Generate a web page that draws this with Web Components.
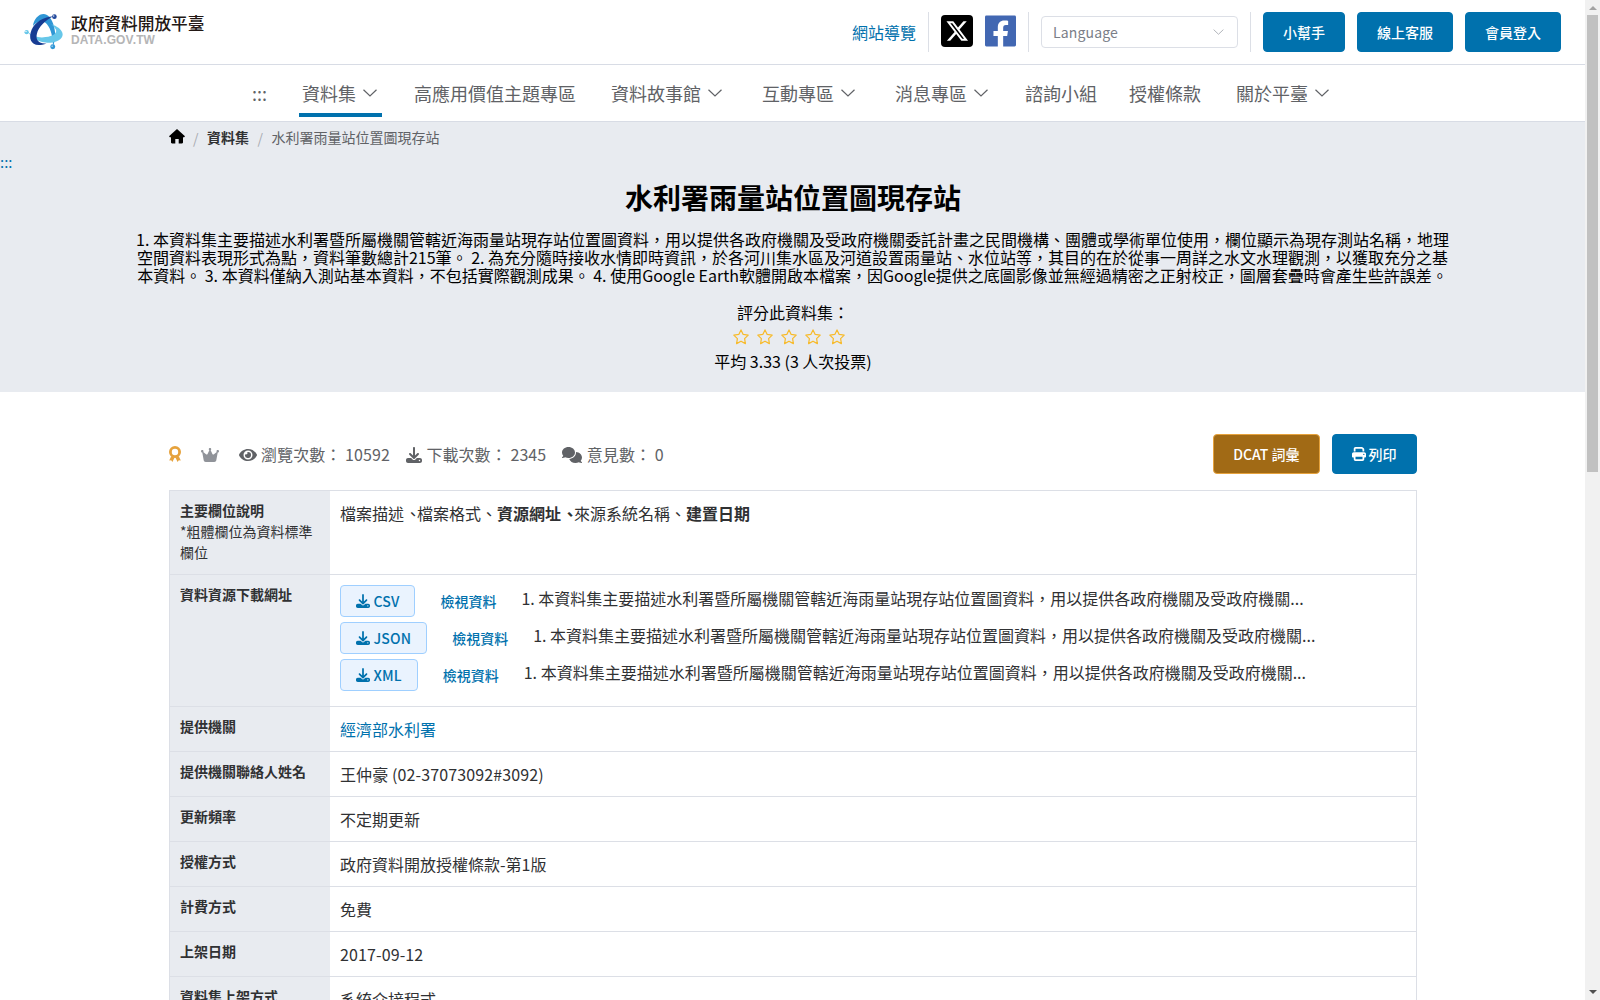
<!DOCTYPE html>
<html lang="zh-Hant-TW">
<head>
<meta charset="utf-8">
<title>水利署雨量站位置圖現存站 | 政府資料開放平臺</title>
<style>
  html, body {
    margin: 0;
    height: 100%;
    overflow: hidden;
  }
  body {
    --primary: #0071ad;
    --line: #dcdfe6;
    --panel: #e8ebf0;
    display: flex;
    background: #fff;
    color: #303133;
    font-family: "Noto Sans CJK TC", sans-serif;
    font-size: 16px;
    line-height: 24px;
  }
  main {
    flex: 1;
    min-width: 0;
    height: 1000px;
    overflow: hidden;
  }
  b {
    font-weight: 700;
  }
  .num {
    letter-spacing: 0.12px;
  }
</style>
</head>
<body>
<main>
  <site-header></site-header>
  <site-nav>
    <nav-item>:::</nav-item>
    <nav-item menu active>資料集</nav-item>
    <nav-item>高應用價值主題專區</nav-item>
    <nav-item menu>資料故事館</nav-item>
    <nav-item menu>互動專區</nav-item>
    <nav-item menu>消息專區</nav-item>
    <nav-item>諮詢小組</nav-item>
    <nav-item>授權條款</nav-item>
    <nav-item menu>關於平臺</nav-item>
  </site-nav>
  <dataset-hero>
    <span slot="title">水利署雨量站位置圖現存站</span>
    <span slot="description">1. 本資料集主要描述水利署暨所屬機關管轄近海雨量站現存站位置圖資料，用以提供各政府機關及受政府機關委託計畫之民間機構、團體或學術單位使用，欄位顯示為現存測站名稱，地理空間資料表現形式為點，資料筆數總計215筆。 2. 為充分隨時接收水情即時資訊，於各河川集水區及河道設置雨量站、水位站等，其目的在於從事一周詳之水文水理觀測，以獲取充分之基本資料。 3. 本資料僅納入測站基本資料，不包括實際觀測成果。 4. 使用Google Earth軟體開啟本檔案，因Google提供之底圖影像並無經過精密之正射校正，圖層套疊時會產生些許誤差。</span>
    <span slot="average">平均 3.33 (3 人次投票)</span>
  </dataset-hero>
  <dataset-stats></dataset-stats>
  <info-table>
    <info-row label="主要欄位說明" note="*粗體欄位為資料標準欄位"><field-list></field-list></info-row>
    <info-row label="資料資源下載網址">
      <resource-item type="CSV"></resource-item>
      <resource-item type="JSON"></resource-item>
      <resource-item type="XML"></resource-item>
    </info-row>
    <info-row label="提供機關"><span style="color: var(--primary)">經濟部水利署</span></info-row>
    <info-row label="提供機關聯絡人姓名"><span class="num">王仲豪 (02-37073092#3092)</span></info-row>
    <info-row label="更新頻率">不定期更新</info-row>
    <info-row label="授權方式">政府資料開放授權條款-第1版</info-row>
    <info-row label="計費方式">免費</info-row>
    <info-row label="上架日期"><span class="num">2017-09-12</span></info-row>
    <info-row label="資料集上架方式">系統介接程式</info-row>
  </info-table>
</main>
<page-scrollbar></page-scrollbar>

<script>
const ICONS = {
  home: ['0 0 16 15', '<path d="M8 0 16 7.2 14.9 8.6 14 7.9V13.2c0 .8-.4 1.2-1.2 1.2H9.7V10H6.3v4.4H3.2C2.4 14.4 2 14 2 13.2V7.9l-.9.7L0 7.2z"/>'],
  chevron: ['0 0 14 8', '<path d="M.5.8 7 7 13.5.8" fill="none" stroke="currentColor" stroke-width="1.2"/>'],
  x: ['0 0 32 32', '<rect width="32" height="32" rx="4" fill="#000"/><path transform="translate(4.2 4.1)" fill="#fff" d="M18.244 2.25h3.308l-7.227 8.26 8.502 11.24H16.17l-5.214-6.817L4.99 21.75H1.68l7.73-8.835L1.254 2.25H8.08l4.713 6.231zm-1.161 17.52h1.833L7.084 4.126H5.117z"/>'],
  facebook: ['0 32 448 448', '<path d="M428 32H20A20 20 0 0 0 0 52v408a20 20 0 0 0 20 20h165.25V327.69h-63V256h63v-54.64c0-62.15 37-96.48 93.67-96.48 27.14 0 55.52 4.84 55.52 4.84v61h-31.27c-30.81 0-40.42 19.12-40.42 38.73V256h68.78l-11 71.69h-57.78V480H428a20 20 0 0 0 20-20V52a20 20 0 0 0-20-20z"/>'],
  star: ['0 0 16 16', '<path d="M8 .9 10.200 5.400 15.200 6.100 11.600 9.600 12.400 14.600 8 12.200 3.600 14.600 4.400 9.600 .8 6.100 5.800 5.400z" fill="none" stroke="currentColor" stroke-width="1.200" stroke-linejoin="round"/>'],
  medal: ['0 0 12 16', '<path d="M2.200 10.200.2 14.400l2-.2 1.200 1.800 2.200-4.400zM9.800 10.200l2 4.200-2-.2-1.200 1.800-2.200-4.400z"/><circle cx="6" cy="6" r="4.600" fill="none" stroke="currentColor" stroke-width="2.800"/>'],
  crown: ['0 0 576 480', '<path d="M309 106c11.400-7 19-19.700 19-34c0-22.100-17.900-40-40-40s-40 17.900-40 40c0 14.400 7.600 27 19 34L209.700 220.600c-9.100 18.200-32.700 23.400-48.600 10.700L72 160c5-6.700 8-15 8-24c0-22.100-17.900-40-40-40S0 113.900 0 136s17.900 40 40 40c.2 0 .5 0 .7 0L86.400 427.400c5.500 30.400 32 52.600 63 52.600H426.600c30.900 0 57.400-22.100 63-52.600L535.300 176c.2 0 .5 0 .7 0c22.100 0 40-17.900 40-40s-17.900-40-40-40s-40 17.900-40 40c0 9 3 17.300 8 24l-89.100 71.300c-15.900 12.700-39.500 7.500-48.600-10.700L309 106z"/>'],
  eye: ['0 64 576 384', '<path d="M572.52 241.4C518.29 135.59 410.93 64 288 64S57.68 135.64 3.48 241.41a32.35 32.35 0 0 0 0 29.19C57.71 376.41 165.07 448 288 448s230.32-71.64 284.52-177.41a32.35 32.35 0 0 0 0-29.19zM288 400a144 144 0 1 1 144-144 143.93 143.93 0 0 1-144 144zm0-240a95.31 95.31 0 0 0-25.31 3.79 47.85 47.85 0 0 1-66.9 66.9A95.78 95.78 0 1 0 288 160z"/>'],
  download: ['0 0 512 512', '<path d="M288 32c0-17.7-14.3-32-32-32s-32 14.300-32 32V274.700l-73.400-73.400c-12.500-12.500-32.800-12.500-45.300 0s-12.500 32.800 0 45.300l128 128c12.500 12.500 32.800 12.500 45.300 0l128-128c12.500-12.500 12.500-32.800 0-45.300s-32.800-12.500-45.300 0L288 274.700V32zM64 352c-35.300 0-64 28.700-64 64v32c0 35.300 28.700 64 64 64H448c35.300 0 64-28.700 64-64V416c0-35.300-28.700-64-64-64H346.500l-45.300 45.300c-25 25-65.500 25-90.500 0L165.500 352H64zm368 56a24 24 0 1 1 0 48 24 24 0 1 1 0-48z"/>'],
  comments: ['0 0 640 512', '<path d="M208 352c114.900 0 208-78.800 208-176S322.900 0 208 0S0 78.800 0 176c0 38.600 14.700 74.300 39.600 103.400c-3.500 9.400-8.700 17.700-14.200 24.700c-4.800 6.200-9.700 11-13.300 14.300c-1.800 1.600-3.300 2.900-4.300 3.700c-.5 .4-.9 .7-1.100 .8l-.2 .2C1 327.200-1.400 334.400 .8 340.900S9.100 352 16 352c21.800 0 43.800-5.600 62.100-12.500c9.200-3.500 17.800-7.400 25.200-11.400C134.100 343.300 169.800 352 208 352zM448 176c0 112.300-99.100 196.900-216.500 207C255.800 457.400 336.400 512 432 512c38.200 0 73.900-8.700 104.700-23.900c7.500 4 16 7.900 25.200 11.400c18.300 6.900 40.300 12.500 62.100 12.500c6.900 0 13.100-4.500 15.200-11.100c2.100-6.600-.2-13.800-5.800-17.900l-.2-.2c-.2-.2-.6-.4-1.100-.8c-1-.8-2.500-2-4.300-3.700c-3.600-3.300-8.500-8.100-13.300-14.300c-5.500-7-10.700-15.400-14.200-24.700c24.900-29 39.600-64.700 39.600-103.400c0-92.800-84.900-168.900-192.600-175.500c.4 5.100 .6 10.300 .6 15.500z"/>'],
  print: ['0 0 512 512', '<path d="M128 0C92.700 0 64 28.700 64 64v96h64V64H354.700L384 93.300V160h64V93.300c0-17-6.700-33.300-18.700-45.300L400 18.700C388 6.700 371.700 0 354.700 0H128zM384 352v32 64H128V384 368 352H384zm64 32h32c17.700 0 32-14.300 32-32V256c0-35.300-28.700-64-64-64H64c-35.300 0-64 28.700-64 64v96c0 17.700 14.300 32 32 32H64v64c0 35.300 28.700 64 64 64H384c35.300 0 64-28.700 64-64V384zM432 248a24 24 0 1 1 0 48 24 24 0 1 1 0-48z"/>']
};

class SvgIcon extends HTMLElement {
  connectedCallback() {
    const [box, shape] = ICONS[this.getAttribute('name')];
    this.attachShadow({ mode: 'open' });
    this.shadowRoot.innerHTML = `
      <style>
        :host { display: block; flex: none; }
        svg { display: block; width: 100%; height: 100%; fill: currentColor; }
      </style>
      <svg viewBox="${box}">${shape}</svg>
    `;
  }
}
customElements.define('svg-icon', SvgIcon);

class SiteLogo extends HTMLElement {
  connectedCallback() {
    this.attachShadow({ mode: 'open' });
    this.shadowRoot.innerHTML = `
      <style>
        :host { display: flex; gap: 7px; margin-top: -2px; }
        svg { width: 40px; height: 37px; }
        .name {
          color: #231815;
          font-size: 16.7px;
          font-weight: 500;
          line-height: 20px;
        }
        .domain {
          color: #b5b5b6;
          font: bold 12px/12px "Liberation Sans", sans-serif;
          margin-top: 1px;
          letter-spacing: 0.15px;
        }
      </style>
      <svg viewBox="18 15 121 112">
        <path fill="#2f96d5" d="M45 54C49 29 68 13 86 20c14 6 24 30 26 54 1 15-1 27-6 42-1-26-5-52-19-68-12-13-28-10-42 6z"/>
        <path fill="#67c7e9" d="M29 72c15 14 34 19 54 16 24-3 37-13 31-24-3-5-8-11-14-15 17 5 34 16 35 30 1 16-23 27-47 26-25-1-46-13-59-33z"/>
        <path fill="#173c93" d="M107 25C78 27 51 42 41 66c-13 32 3 57 45 41-22 2-34-9-29-29 5-22 27-42 50-53z"/>
        <circle cx="110" cy="26" r="7" fill="#21489b"/>
        <circle cx="26" cy="73" r="6.500" fill="#67c7e9"/>
        <circle cx="105" cy="117" r="7.500" fill="#2f96d5"/>
        <circle cx="108" cy="24" r="2" fill="#fff"/>
        <circle cx="24" cy="71" r="2" fill="#fff"/>
        <circle cx="103" cy="115" r="2" fill="#fff"/>
      </svg>
      <div>
        <div class="name">政府資料開放平臺</div>
        <div class="domain">DATA.GOV.TW</div>
      </div>
    `;
  }
}
customElements.define('site-logo', SiteLogo);

class UiButton extends HTMLElement {
  connectedCallback() {
    this.attachShadow({ mode: 'open' });
    this.shadowRoot.innerHTML = `
      <style>
        :host {
          display: flex;
          align-items: center;
          gap: 3px;
          box-sizing: border-box;
          height: 40px;
          padding: 0 19px;
          border: 1px solid var(--primary);
          border-radius: 4px;
          background: var(--primary);
          color: #fff;
          font-size: 14px;
          font-weight: 500;
          line-height: 14px;
          white-space: nowrap;
        }
        :host([type="warning"]) { background: #a16a15; border-color: #e6a23c; }
        :host([type="plain"]) {
          gap: 3.5px;
          height: 32px;
          padding: 0 15px;
          background: #eaf3fe;
          border-color: #9fcfff;
          color: var(--primary);
          letter-spacing: 0.15px;
        }
      </style>
      <slot></slot>
    `;
  }
}
customElements.define('ui-button', UiButton);

class SiteHeader extends HTMLElement {
  connectedCallback() {
    this.attachShadow({ mode: 'open' });
    this.shadowRoot.innerHTML = `
      <style>
        :host {
          display: flex;
          align-items: center;
          gap: 12px;
          height: 64px;
          padding: 0 24px;
          border-bottom: 1px solid #d8dce5;
        }
        site-logo { margin-right: auto; }
        a { color: var(--primary); }
        i { width: 1px; height: 40px; background: var(--line); }
        .x { width: 32px; height: 32px; margin-top: -2px; }
        .fb { width: 31px; height: 32px; margin-top: -2px; color: #4267b2; }
        .select {
          display: flex;
          align-items: center;
          justify-content: space-between;
          box-sizing: border-box;
          width: 197px;
          height: 32px;
          padding: 0 13px 0 11px;
          border: 1px solid var(--line);
          border-radius: 4px;
          color: #7a7e87;
          font-size: 14px;
          letter-spacing: 0.15px;
        }
        .select svg-icon { width: 11px; height: 6px; color: #a8abb2; }
      </style>
      <site-logo></site-logo>
      <a>網站導覽</a>
      <i></i>
      <svg-icon class="x" name="x"></svg-icon>
      <svg-icon class="fb" name="facebook"></svg-icon>
      <i></i>
      <div class="select"><span>Language</span><svg-icon name="chevron"></svg-icon></div>
      <i></i>
      <ui-button>小幫手</ui-button>
      <ui-button>線上客服</ui-button>
      <ui-button>會員登入</ui-button>
    `;
  }
}
customElements.define('site-header', SiteHeader);

class SiteNav extends HTMLElement {
  connectedCallback() {
    this.attachShadow({ mode: 'open' });
    this.shadowRoot.innerHTML = `
      <style>
        :host {
          display: flex;
          justify-content: center;
          gap: 32px;
          height: 56px;
          padding-left: 1px;
          border-bottom: 1px solid #d8dce5;
        }
      </style>
      <slot></slot>
    `;
  }
}
customElements.define('site-nav', SiteNav);

class NavItem extends HTMLElement {
  connectedCallback() {
    this.attachShadow({ mode: 'open' });
    this.shadowRoot.innerHTML = `
      <style>
        :host {
          display: flex;
          align-items: center;
          box-sizing: border-box;
          height: 52px;
          padding-top: 7px;
          border-bottom: 4px solid transparent;
          color: #606266;
          font-size: 18px;
          white-space: nowrap;
        }
        :host([menu]) { padding-left: 3px; padding-right: 5px; }
        :host([active]) { border-color: var(--primary); }
        svg-icon { width: 14px; height: 8px; margin-left: 7px; }
      </style>
      <slot></slot>
      ${this.hasAttribute('menu') ? '<svg-icon name="chevron"></svg-icon>' : ''}
    `;
  }
}
customElements.define('nav-item', NavItem);

class DatasetHero extends HTMLElement {
  connectedCallback() {
    this.attachShadow({ mode: 'open' });
    this.shadowRoot.innerHTML = `
      <style>
        :host {
          display: block;
          height: 270px;
          background: var(--panel);
          color: #000;
          text-align: center;
        }
        nav {
          display: flex;
          align-items: center;
          width: 1248px;
          height: 29px;
          margin: 0 auto;
          font-size: 14px;
          line-height: 20px;
          color: #606266;
        }
        nav svg-icon { width: 16px; height: 15px; color: #000; }
        nav i { font-style: normal; color: #a8abb2; margin: 2px 8.500px 0; }
        nav b { color: #303133; }
        .anchor {
          text-align: left;
          color: var(--primary);
          height: 22px;
          font-size: 15px;
          line-height: 22px;
        }
        h1 {
          margin: 4px 0 13px 1px;
          font-size: 28px;
          font-weight: 700;
          line-height: 40px;
        }
        p { width: 1320px; margin: 0 auto 16px; line-height: 18px; }
        .label, .average { padding-left: 1px; }
        .rate { display: flex; justify-content: center; gap: 8px; padding: 5px 7px 4px 0; color: #f7ba2a; }
        .rate svg-icon { width: 16px; height: 16px; }
      </style>
      <nav>
        <svg-icon name="home"></svg-icon><i>/</i><b>資料集</b><i>/</i><span>水利署雨量站位置圖現存站</span>
      </nav>
      <div class="anchor">:::</div>
      <h1><slot name="title"></slot></h1>
      <p><slot name="description"></slot></p>
      <div class="label">評分此資料集：</div>
      <div class="rate">${'<svg-icon name="star"></svg-icon>'.repeat(5)}</div>
      <div class="average"><slot name="average"></slot></div>
    `;
  }
}
customElements.define('dataset-hero', DatasetHero);

class DatasetStats extends HTMLElement {
  connectedCallback() {
    this.attachShadow({ mode: 'open' });
    this.shadowRoot.innerHTML = `
      <style>
        :host {
          display: flex;
          align-items: center;
          width: 1248px;
          margin: 42px auto 16px;
          color: #606266;
        }
        span { margin: 0 16px 0 4.500px; white-space: pre; letter-spacing: 0.08px; }
        .medal { width: 12px; height: 16px; color: #e6a23c; margin-right: 20px; }
        .crown { width: 18px; height: 15px; color: #909399; margin-right: 20px; }
        .eye { width: 18px; height: 16px; margin-top: 1px; }
        .download { width: 16px; height: 16px; margin-top: 1px; }
        .comments { width: 20px; height: 16px; margin-top: 1px; }
        ui-button + ui-button { margin-left: 12px; }
        ui-button svg-icon { width: 14px; height: 14px; }
        ui-button:first-of-type { margin-left: auto; }
      </style>
      <svg-icon class="medal" name="medal"></svg-icon>
      <svg-icon class="crown" name="crown"></svg-icon>
      <svg-icon class="eye" name="eye"></svg-icon><span>瀏覽次數： 10592</span>
      <svg-icon class="download" name="download"></svg-icon><span>下載次數： 2345</span>
      <svg-icon class="comments" name="comments"></svg-icon><span>意見數： 0</span>
      <ui-button type="warning">DCAT 詞彙</ui-button>
      <ui-button><svg-icon name="print"></svg-icon>列印</ui-button>
    `;
  }
}
customElements.define('dataset-stats', DatasetStats);

class InfoTable extends HTMLElement {
  connectedCallback() {
    this.attachShadow({ mode: 'open' });
    this.shadowRoot.innerHTML = `
      <style>
        :host {
          display: block;
          box-sizing: border-box;
          width: 1248px;
          margin: 0 auto;
          border: 1px solid var(--line);
          border-bottom: 0;
        }
      </style>
      <slot></slot>
    `;
  }
}
customElements.define('info-table', InfoTable);

class InfoRow extends HTMLElement {
  connectedCallback() {
    const note = this.getAttribute('note') || '';
    this.attachShadow({ mode: 'open' });
    this.shadowRoot.innerHTML = `
      <style>
        :host {
          display: grid;
          grid-template-columns: 160px 1fr;
          border-bottom: 1px solid var(--line);
        }
        .label {
          box-sizing: border-box;
          padding: 9px 9px 11px 10.500px;
          background: var(--panel);
          font-size: 14px;
          line-height: 21px;
        }
        .value { padding: 10px 10px 10px 10.500px; }
      </style>
      <div class="label"><b>${this.getAttribute('label')}</b><div>${note}</div></div>
      <div class="value"><slot></slot></div>
    `;
  }
}
customElements.define('info-row', InfoRow);

class FieldList extends HTMLElement {
  connectedCallback() {
    this.attachShadow({ mode: 'open' });
    this.shadowRoot.innerHTML = `
      <style>
        :host { display: block; }
        .tight { margin: 0 -4px 0 1px; }
      </style>
      檔案描述<span class="tight">、</span>檔案格式、<b>資源網址<span class="tight">、</span></b>來源系統名稱、<b>建置日期</b>
    `;
  }
}
customElements.define('field-list', FieldList);

class ResourceItem extends HTMLElement {
  connectedCallback() {
    this.attachShadow({ mode: 'open' });
    this.shadowRoot.innerHTML = `
      <style>
        :host {
          display: flex;
          align-items: center;
          gap: 25px;
          height: 32px;
          margin-bottom: 5px;
        }
        svg-icon { width: 14px; height: 14px; }
        a {
          color: var(--primary);
          font-size: 14px;
          font-weight: 500;
        }
        span { margin-top: -7px; }
      </style>
      <ui-button type="plain"><svg-icon name="download"></svg-icon>${this.getAttribute('type')}</ui-button>
      <a>檢視資料</a>
      <span>1. 本資料集主要描述水利署暨所屬機關管轄近海雨量站現存站位置圖資料，用以提供各政府機關及受政府機關...</span>
    `;
  }
}
customElements.define('resource-item', ResourceItem);

class PageScrollbar extends HTMLElement {
  connectedCallback() {
    this.attachShadow({ mode: 'open' });
    this.shadowRoot.innerHTML = `
      <style>
        :host {
          display: flex;
          flex-direction: column;
          align-items: center;
          box-sizing: border-box;
          width: 15px;
          height: 1000px;
          padding: 6px 0;
          background: #f1f1f1;
        }
        .up { border: 4px solid transparent; border-top: 0; border-bottom-color: #a3a3a3; }
        .down { border: 4px solid transparent; border-bottom: 0; border-top-color: #505050; margin-top: auto; }
        .thumb { width: 11px; height: 457px; margin-top: 5px; background: #c1c1c1; }
      </style>
      <div class="up"></div>
      <div class="thumb"></div>
      <div class="down"></div>
    `;
  }
}
customElements.define('page-scrollbar', PageScrollbar);
</script>
</body>
</html>
